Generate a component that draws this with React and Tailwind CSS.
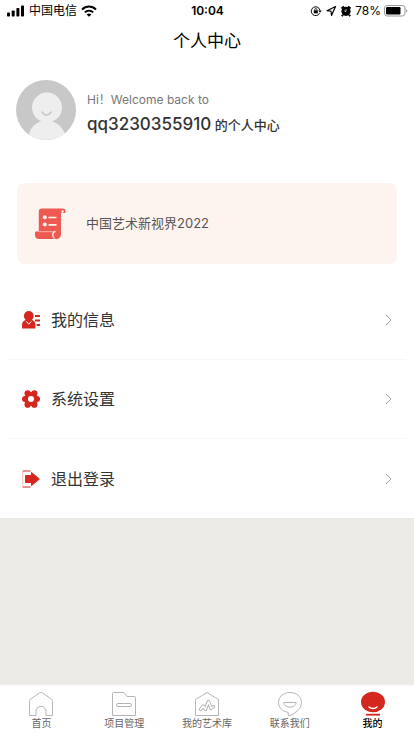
import { clsx } from "clsx";

function SignalIcon() {
  return (
    <svg width="18" height="12" viewBox="0 0 18 12" fill="#000">
      <rect x="0" y="7.5" width="3" height="4" rx="0.8" />
      <rect x="4.7" y="5.5" width="3" height="6" rx="0.8" />
      <rect x="9.4" y="3" width="3" height="8.5" rx="0.8" />
      <rect x="14" y="0.5" width="3" height="11" rx="0.8" />
    </svg>
  );
}

function WifiIcon() {
  return (
    <svg width="16" height="12" viewBox="0 0 16 12" fill="none" stroke="#000" strokeWidth="2">
      <path d="M1 4.6C5 .6 11 .6 15 4.6" />
      <path d="M3.8 7.4c2.4-2.3 6-2.3 8.4 0" />
      <path d="M8 11.8 5.6 9.4c1.4-1.2 3.4-1.2 4.8 0Z" fill="#000" stroke="none" />
    </svg>
  );
}

function StatusIcons() {
  return (
    <svg width="42" height="12" viewBox="0 0 42 12" fill="none" stroke="#000">
      {/* rotation lock */}
      <path d="M9.6 8.2A4.4 4.4 0 1 1 10 5.4" strokeWidth="1" />
      <path d="m8.3 5.4 3.4 0-1.7 2.4Z" fill="#000" stroke="none" />
      <rect x="3.8" y="5.3" width="4" height="3" fill="#000" stroke="none" />
      <path d="M4.7 5.4V4.6a1.1 1.1 0 0 1 2.2 0v.8" strokeWidth="0.8" />
      {/* location */}
      <path d="M25.5 1.500 17 5.700l4 .5.500 4.300Z" strokeWidth="1.2" strokeLinejoin="round" />
      {/* alarm */}
      <circle cx="36" cy="6.300" r="4.600" fill="#000" stroke="none" />
      <path d="M31.500 3.600 34 1.400M40.500 3.600 38 1.400M33 9.800l-1.200 1.400M39 9.800l1.200 1.400" strokeWidth="2" />
      <path d="M36 4v2.500l-1.700-.7" stroke="#fff" strokeWidth="0.700" />
    </svg>
  );
}

function BatteryIcon() {
  return (
    <svg width="24" height="12" viewBox="0 0 24 12" fill="none">
      <rect x="0.5" y="0.5" width="20.5" height="10.5" rx="2.6" stroke="#999" />
      <rect x="2" y="2" width="14.5" height="7.5" rx="1.2" fill="#000" />
      <path d="M22.2 4c1.5.5 1.5 3.1 0 3.6Z" fill="#999" />
    </svg>
  );
}

function Avatar() {
  return (
    <svg width="60" height="60" viewBox="0 0 60 60" fill="none">
      <clipPath id="avatar-clip">
        <circle cx="30" cy="30" r="30" />
      </clipPath>
      <circle cx="30" cy="30" r="30" fill="#c8c8c8" />
      <g clipPath="url(#avatar-clip)" fill="#eee">
        <path d="M12 62c0-12 6-19 14-21h9c8 2 15 9 15 21Z" />
        <circle cx="31" cy="27.5" r="15" />
      </g>
      <path d="M26.300 32c1.400 3.900 7 3.900 8.600 0" stroke="#c8c8c8" strokeWidth="1.600" strokeLinecap="round" />
    </svg>
  );
}

function ScrollIcon() {
  return (
    <svg width="32" height="32" viewBox="0 0 32 32" fill="#ee5a52">
      <path d="M8 .5h20.5A3 3 0 0 1 31.5 3.5V5H27v21.5a4.500 4.500 0 0 1-4.500 4.500H5a4 4 0 0 1-4-4v-2.500a1 1 0 0 1 1-1h2.800V3.700A3.200 3.200 0 0 1 8 .5Z" />
      <path d="M5 23.700h13.500" stroke="#fdf3ef" strokeWidth="0.600" />
      <path d="M21.500 23.500c-2.200 0-2.700 1.500-2.700 3.500 0 1.700.6 2.800 1.800 3.500" fill="none" stroke="#fdf3ef" strokeWidth="1.300" />
      <circle cx="28.600" cy="3.500" r="1.200" fill="#fdf3ef" />
      <circle cx="10.800" cy="9.300" r="2" fill="#fdf3ef" />
      <circle cx="10.800" cy="16.600" r="2" fill="#fdf3ef" />
      <path d="M14.500 9.500h8M14.500 16.800h8" stroke="#fdf3ef" strokeWidth="1.700" />
    </svg>
  );
}

function ProfileIcon() {
  return (
    <svg width="18" height="18" viewBox="0 0 18 18" fill="#d4281f">
      <circle cx="6.800" cy="5" r="4.900" />
      <path d="M0 17.500v-3.700C0 11.200 1.600 9.700 3.400 9h6.800c1.900.7 3.200 2.200 3.200 4.800v3.700Z" />
      <path d="m4.200 10.400 2.600 2.800 2.600-2.800" fill="none" stroke="#fff" strokeWidth="1" />
      <path d="M13 5h5M13 9.500h5M14.600 14H18" stroke="#d4281f" strokeWidth="2" />
    </svg>
  );
}

function SettingsIcon() {
  return (
    <svg width="18" height="18" viewBox="0 0 18 18" fill="#d4281f">
      <circle cx="5.600" cy="3.300" r="3.100" />
      <circle cx="12.400" cy="3.300" r="3.100" />
      <circle cx="3" cy="9" r="3.100" />
      <circle cx="15" cy="9" r="3.100" />
      <circle cx="5.600" cy="14.700" r="3.100" />
      <circle cx="12.400" cy="14.700" r="3.100" />
      <circle cx="9" cy="9" r="7" />
      <circle cx="9" cy="9" r="3" fill="#fff" />
    </svg>
  );
}

function LogoutIcon() {
  return (
    <svg width="18" height="18" viewBox="0 0 18 18" fill="#d4281f">
      <path d="M9.500 2.500 17.400 9l-7.900 6.500v-3H3.500v-7h6Z" stroke="#d4281f" strokeLinejoin="round" />
      <path d="M8.500 1H.7M8.500 17H.7" stroke="#d4281f" strokeWidth="1.100" />
      <path d="M.7 1v16" stroke="#f0a39e" strokeWidth="0.700" />
    </svg>
  );
}

function ChevronIcon() {
  return (
    <svg width="7" height="12" viewBox="0 0 7 12" fill="none" stroke="#a3a3a3">
      <path d="m1 1 5 5-5 5" />
    </svg>
  );
}

function HomeIcon() {
  return (
    <svg width="26" height="26" viewBox="0 0 26 26" fill="none" stroke="#b5b5b5" strokeLinejoin="round">
      <path d="M1.500 24.500V10.500c0-1.200.5-2 1.500-2.700L11.300 2c1.100-.8 2.300-.8 3.400 0L23 7.800c1 .7 1.500 1.500 1.500 2.700v14h-6.500v-4.300c0-6.500-10-6.500-10 0v4.300Z" />
    </svg>
  );
}

function ProjectIcon() {
  return (
    <svg width="26" height="26" viewBox="0 0 26 26" fill="none" stroke="#b5b5b5" strokeLinejoin="round">
      <path d="M1.500 24.500v-22c0-.6.400-1 1-1h9.700c.7 0 1 .2 1.400.7L16 5.500h7.500c.6 0 1 .4 1 1v18Z" />
      <rect x="5.500" y="12.500" width="15" height="3" rx="1.500" />
    </svg>
  );
}

function ArtIcon() {
  return (
    <svg width="26" height="26" viewBox="0 0 26 26" fill="none" stroke="#b5b5b5" strokeLinejoin="round">
      <path d="M1.500 24.500V8.500L13 1.500l11.500 7v16Z" />
      {/* pulse line drawn as an outline */}
      <path
        d="M6.500 18.500 9.300 15l2 3.500L14.500 10.500l2.500 7 2.500-2"
        stroke="#b0b0b0"
        strokeWidth="3.400"
        strokeLinecap="round"
      />
      <path
        d="M6.500 18.500 9.300 15l2 3.500L14.500 10.500l2.500 7 2.500-2"
        stroke="#fff"
        strokeWidth="1.600"
        strokeLinecap="round"
      />
    </svg>
  );
}

function ContactIcon() {
  return (
    <svg width="26" height="26" viewBox="0 0 26 26" fill="none" stroke="#b5b5b5" strokeLinejoin="round">
      <path d="M11 21.300C5.500 20.500 1.500 16.500 1.500 11.500c0-5.700 5-10 11.500-10s11.500 4.300 11.500 10c0 6-5.500 11-13 13.300Z" />
      <path d="M6.800 11.500h12.400c0 6.200-12.400 6.200-12.400 0Z" />
    </svg>
  );
}

function MineIcon() {
  return (
    <svg width="26" height="26" viewBox="0 0 26 26" fill="none">
      <ellipse cx="13" cy="11" rx="12" ry="10.300" fill="#d4281f" />
      <path d="M9 16c2 1.900 6 1.900 8 0" stroke="#fff" strokeWidth="1.500" strokeLinecap="round" />
      <path d="M6 23.700h14" stroke="#d4281f" strokeWidth="1.800" />
    </svg>
  );
}

const menu = [
  { label: "我的信息", icon: ProfileIcon },
  { label: "系统设置", icon: SettingsIcon },
  { label: "退出登录", icon: LogoutIcon },
];

const tabs = [
  { label: "首页", icon: HomeIcon },
  { label: "项目管理", icon: ProjectIcon },
  { label: "我的艺术库", icon: ArtIcon },
  { label: "联系我们", icon: ContactIcon },
  { label: "我的", icon: MineIcon, active: true },
];

export default function App() {
  return (
    <div className="flex min-h-screen flex-col bg-[#ecebe8] font-['Inter','Noto_Sans_CJK_SC',sans-serif] text-[#333]">
      <div className="bg-white">
        {/* Status bar */}
        <div className="grid h-[22px] grid-cols-[1fr_auto_1fr] items-center pr-1.5 pl-[7px] text-xs text-black">
          <div className="flex items-center gap-1">
            <SignalIcon />
            <span>中国电信</span>
            <WifiIcon />
          </div>
          <span className="font-semibold">10:04</span>
          <div className="flex items-center justify-end gap-[3px]">
            <StatusIcons />
            <span>78%</span>
            <BatteryIcon />
          </div>
        </div>

        <header className="flex h-10 items-center justify-center">
          <h1 className="text-[17px] text-black">个人中心</h1>
        </header>

        {/* Profile */}
        <section className="flex items-center gap-[11px] px-4 pt-[18px]">
          <Avatar />
          <div className="pt-2">
            <p className="text-xs leading-5 text-[#777]">Hi！Welcome back to</p>
            <p className="text-[13px] leading-7 font-medium">
              <span className="text-[17px]">qq3230355910</span> 的个人中心
            </p>
          </div>
        </section>

        <a
          href="#exhibition"
          className="mx-[17px] mt-[43px] flex h-[81px] items-center gap-5 rounded-lg bg-[#fdf3ef] px-[17px] text-[13px] text-[#555]"
        >
          <ScrollIcon />
          中国艺术新视界2022
        </a>

        {/* Menu */}
        <nav className="mt-[17px] px-2">
          {menu.map(({ label, icon: Icon }) => (
            <button
              key={label}
              className="flex h-[79px] w-full items-center gap-[11px] border-b border-[#f7f7f7] pr-[14px] pl-[14px] text-left text-base last:border-0"
            >
              <Icon />
              <span className="flex-1">{label}</span>
              <ChevronIcon />
            </button>
          ))}
        </nav>
      </div>

      {/* Tab bar */}
      <nav className="mt-auto grid h-[51px] grid-cols-5 bg-white">
        {tabs.map(({ label, icon: Icon, active }) => (
          <a
            key={label}
            href="#tab"
            className={clsx(
              "flex flex-col items-center pt-1.5 text-[10px] leading-3",
              active ? "font-medium text-black" : "text-[#666]"
            )}
          >
            <Icon />
            {label}
          </a>
        ))}
      </nav>
    </div>
  );
}
